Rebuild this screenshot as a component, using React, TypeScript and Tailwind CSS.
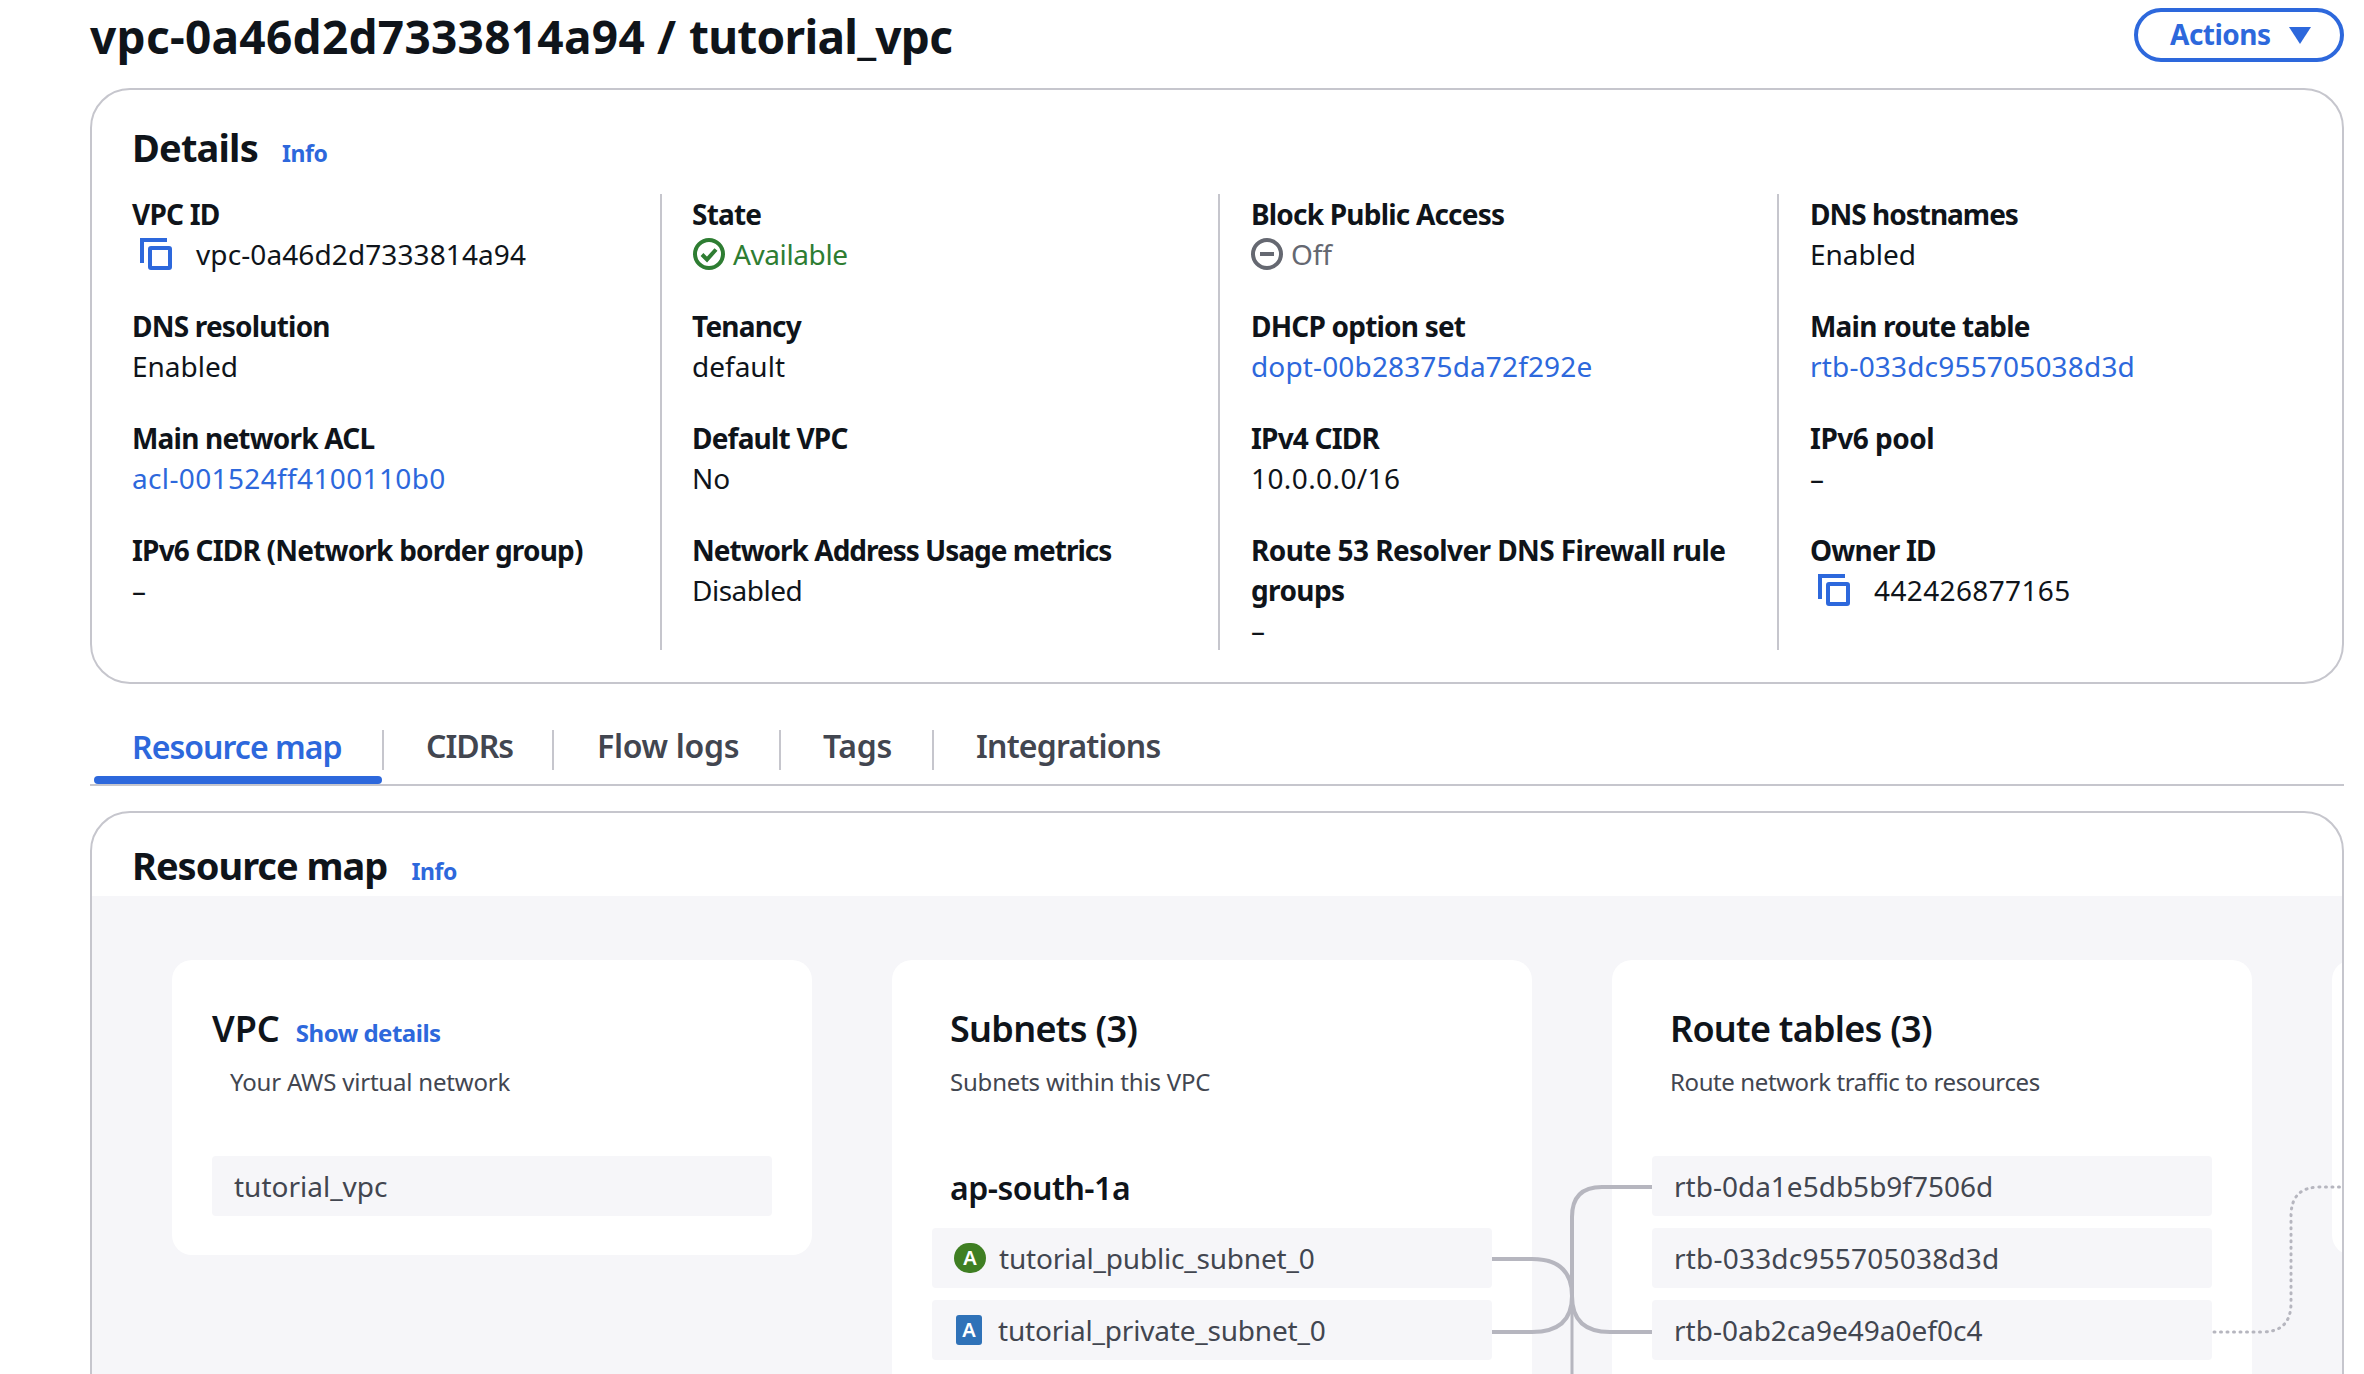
import React from "react";

function CopyIcon() {
  return (
    <svg width="32" height="32" viewBox="0 0 32 32" fill="none" stroke="#2d68dc" strokeWidth="4" className="ml-[8px] mr-[24px] shrink-0">
      <path d="M2 25V2h25" />
      <rect x="10" y="10" width="20" height="20" rx="1" />
    </svg>
  );
}

function Field({ label, children }: { label: React.ReactNode; children: React.ReactNode }) {
  return (
    <div>
      <div className="font-bold tracking-[-0.8px]">{label}</div>
      <div className="flex items-center h-[40px]">{children}</div>
    </div>
  );
}

function Link({ children, className }: { children: React.ReactNode; className?: string }) {
  return <span className={"text-[#2d68dc] " + (className ?? "")}>{children}</span>;
}

function ListRow({ children }: { children: React.ReactNode }) {
  return (
    <div className="flex items-center h-[60px] rounded-[4px] bg-[#f6f6f9] text-[#424650]">{children}</div>
  );
}

function Connectors() {
  return (
    <svg className="absolute left-0 top-0" width="2364" height="1374" fill="none">
      <g stroke="#b6b6bf" strokeWidth="4">
        <path d="M1652 1187H1602Q1572 1187 1572 1217V1300" />
        <path d="M1492 1259H1532Q1572 1259 1572 1296Q1572 1332 1532 1332H1492" />
        <path d="M1652 1332H1610Q1572 1332 1572 1296" />
      </g>
      <path d="M1572 1300V1374" stroke="#b6b6bf" strokeWidth="3" />
      <path d="M2214 1332H2262Q2291 1332 2291 1303V1216Q2291 1187 2320 1187H2340" stroke="#b6b6bf" strokeWidth="3" strokeLinecap="round" strokeDasharray="1 5.5" />
    </svg>
  );
}

export default function App() {
  return (
    <div className="relative h-screen w-[2364px] overflow-hidden bg-white text-[28px] leading-[40px] text-[#0f141a] font-['Noto_Sans',sans-serif]">
      <header className="flex items-start justify-between pl-[90px] pr-[20px] pt-[8px]">
        <h1 className="text-[46px] leading-[56px] font-bold">
          <span className="tracking-[0.28px]">vpc-0a46d2d7333814a94</span> / <span className="ml-[1px] tracking-[-0.75px]">tutorial_vpc</span>
        </h1>
        <button className="flex items-center h-[54px] w-[210px] pl-[32px] rounded-full border-[4px] border-[#2d68dc] text-[#2d68dc] font-bold tracking-[-0.5px]">
          <span className="-mt-[2px]">Actions</span>
          <svg width="24" height="18" viewBox="0 0 24 18" className="ml-[17px]" fill="#2d68dc">
            <path d="M1 1h22L12 18z" />
          </svg>
        </button>
      </header>

      <section className="mt-[24px] ml-[90px] w-[2254px] h-[596px] rounded-[40px] border-2 border-[#c6c6cd] px-[40px] pt-[30px]">
        <div className="flex items-baseline h-[54px]">
          <h2 className="text-[38px] leading-[54px] font-bold tracking-[-0.8px]">Details</h2>
          <span className="ml-[24px] text-[23px] font-bold tracking-[-0.4px] text-[#2d68dc]">Info</span>
        </div>
        <div className="mt-[20px] grid grid-cols-[528px_558px_559px_1fr] h-[456px]">
          <div className="flex flex-col gap-[32px]">
            <Field label="VPC ID">
              <CopyIcon />
              <span className="tracking-[0.1px]">vpc-0a46d2d7333814a94</span>
            </Field>
            <Field label="DNS resolution">Enabled</Field>
            <Field label="Main network ACL">
              <Link className="tracking-[0.36px]">acl-001524ff4100110b0</Link>
            </Field>
            <Field label="IPv6 CIDR (Network border group)">–</Field>
          </div>
          <div className="flex flex-col gap-[32px] border-l-2 border-[#c6c6cd] pl-[30px]">
            <Field label="State">
              <span className="flex items-center text-[#2e7d32] tracking-[-0.4px]">
                <svg width="32" height="32" viewBox="0 0 32 32" fill="none" stroke="#2e7d32" strokeWidth="4" className="ml-[1px] mr-[8px]">
                  <circle cx="16" cy="16" r="14" />
                  <path d="M9 16.5l5 5 9-10" />
                </svg>
                Available
              </span>
            </Field>
            <Field label="Tenancy">default</Field>
            <Field label="Default VPC">No</Field>
            <Field label={<span className="tracking-[-1px]">Network Address Usage metrics</span>}>
              <span className="tracking-[-0.5px]">Disabled</span>
            </Field>
          </div>
          <div className="flex flex-col gap-[32px] border-l-2 border-[#c6c6cd] pl-[31px]">
            <Field label="Block Public Access">
              <span className="flex items-center text-[#656871]">
                <svg width="32" height="32" viewBox="0 0 32 32" fill="none" stroke="#656871" strokeWidth="4" className="mr-[8px]">
                  <circle cx="16" cy="16" r="14" />
                  <path d="M9 16h14" />
                </svg>
                Off
              </span>
            </Field>
            <Field label="DHCP option set">
              <Link className="tracking-[0.14px]">dopt-00b28375da72f292e</Link>
            </Field>
            <Field label="IPv4 CIDR">
              <span className="tracking-[0.4px]">10.0.0.0/16</span>
            </Field>
            <Field label={<span className="block w-[500px] tracking-[-0.6px]">Route 53 Resolver DNS Firewall rule groups</span>}>–</Field>
          </div>
          <div className="flex flex-col gap-[32px] border-l-2 border-[#c6c6cd] pl-[31px]">
            <Field label={<span className="tracking-[-1px]">DNS hostnames</span>}>Enabled</Field>
            <Field label="Main route table">
              <Link className="tracking-[0.18px]">rtb-033dc955705038d3d</Link>
            </Field>
            <Field label={<span className="tracking-[-0.5px]">IPv6 pool</span>}>–</Field>
            <Field label="Owner ID">
              <CopyIcon />
              <span className="tracking-[0.37px]">442426877165</span>
            </Field>
          </div>
        </div>
      </section>

      <nav className="mt-[42px] ml-[90px] w-[2254px] h-[60px] flex border-b-2 border-[#c6c6cd] text-[32px] leading-[46px] font-semibold tracking-[-0.7px] text-[#424650]">
        <div className="relative w-[292px] h-[58px] pl-[42px] -mt-[2px] pb-[2px] text-[#2d68dc] tracking-[-0.95px]">
          Resource map
          <div className="absolute left-[4px] -bottom-[2px] h-[8px] w-[288px] rounded-[4px] bg-[#2d68dc]" />
        </div>
        <div className="border-l-2 border-[#c6c6cd] h-[40px] mt-[4px] pl-[42px] pr-[40px] leading-[32px] w-[170px] tracking-[-1px]">CIDRs</div>
        <div className="border-l-2 border-[#c6c6cd] h-[40px] mt-[4px] pl-[43px] leading-[32px] w-[227px] tracking-[-0.3px]">Flow logs</div>
        <div className="border-l-2 border-[#c6c6cd] h-[40px] mt-[4px] pl-[42px] leading-[32px] w-[153px] tracking-[-0.3px]">Tags</div>
        <div className="border-l-2 border-[#c6c6cd] h-[40px] mt-[4px] pl-[42px] leading-[32px] tracking-[-0.8px]">Integrations</div>
      </nav>

      <section className="mt-[25px] ml-[90px] w-[2254px] h-[600px] rounded-t-[40px] border-2 border-[#c6c6cd] overflow-hidden">
        <div className="flex items-baseline h-[83px] pl-[40px] pt-[25px]">
          <h2 className="text-[38px] leading-[54px] font-bold tracking-[-1px]">Resource map</h2>
          <span className="ml-[24px] text-[23px] font-bold tracking-[-0.4px] text-[#2d68dc]">Info</span>
        </div>
        <div className="flex gap-[80px] h-full bg-[#f6f6f9] pl-[80px] pt-[64px]">
          <div className="w-[640px] h-[295px] shrink-0 rounded-[20px] bg-white px-[40px] pt-[45px]">
            <div className="flex items-baseline">
              <h3 className="text-[36px] leading-[48px] font-semibold">VPC</h3>
              <span className="ml-[16px] text-[24px] font-bold tracking-[-0.5px] text-[#2d68dc]">Show details</span>
            </div>
            <p className="mt-[11px] ml-[18px] text-[24px] leading-[36px] tracking-[-0.2px] text-[#424650]">Your AWS virtual network</p>
            <div className="mt-[56px]">
              <ListRow><span className="pl-[22px]">tutorial_vpc</span></ListRow>
            </div>
          </div>

          <div className="w-[640px] shrink-0 rounded-t-[20px] bg-white pt-[45px]">
            <h3 className="ml-[58px] text-[36px] leading-[48px] font-semibold tracking-[-0.7px]">Subnets (3)</h3>
            <p className="mt-[11px] ml-[58px] text-[24px] leading-[36px] tracking-[-0.2px] text-[#424650]">Subnets within this VPC</p>
            <h4 className="mt-[66px] ml-[58px] text-[32px] leading-[44px] font-semibold tracking-[-0.5px]">ap-south-1a</h4>
            <div className="mt-[18px] mx-[40px] flex flex-col gap-[12px]">
              <ListRow>
                <span className="ml-[22px] mr-[13px] flex h-[30px] w-[32px] items-center justify-center rounded-full bg-[#3f7f23] text-[20px] font-semibold text-white">A</span>
                <span className="tracking-[-0.2px]">tutorial_public_subnet_0</span>
              </ListRow>
              <ListRow>
                <span className="ml-[24px] mr-[16px] flex h-[30px] w-[26px] items-center justify-center rounded-[3px] bg-[#2f72b8] text-[20px] font-semibold text-white">A</span>
                <span className="tracking-[-0.2px]">tutorial_private_subnet_0</span>
              </ListRow>
            </div>
          </div>

          <div className="w-[640px] shrink-0 rounded-t-[20px] bg-white pt-[45px]">
            <h3 className="ml-[58px] text-[36px] leading-[48px] font-semibold tracking-[-0.75px]">Route tables (3)</h3>
            <p className="mt-[11px] ml-[58px] text-[24px] leading-[36px] tracking-[-0.4px] text-[#424650]">Route network traffic to resources</p>
            <div className="mt-[56px] mx-[40px] flex flex-col gap-[12px]">
              <ListRow><span className="pl-[22px]">rtb-0da1e5db5b9f7506d</span></ListRow>
              <ListRow><span className="pl-[22px] tracking-[0.2px]">rtb-033dc955705038d3d</span></ListRow>
              <ListRow><span className="pl-[22px]">rtb-0ab2ca9e49a0ef0c4</span></ListRow>
            </div>
          </div>

          <div className="w-[640px] h-[295px] shrink-0 rounded-[20px] bg-white" />
        </div>
      </section>

      <Connectors />
    </div>
  );
}
